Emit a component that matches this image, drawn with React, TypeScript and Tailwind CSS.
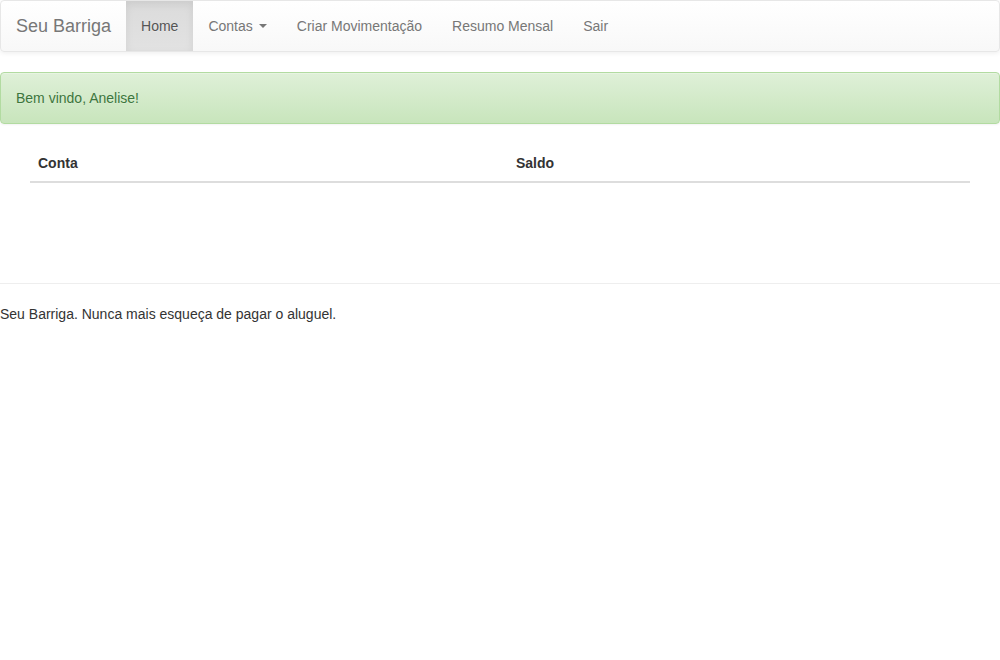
import React from "react";

export default function App() {
  const font = { fontFamily: '"Liberation Sans", Arial, Helvetica, sans-serif' };
  return (
    <div className="min-h-[660px] bg-white text-[14px] leading-[20px] text-[#333]" style={font}>
      <nav className="mb-[20px] flex h-[52px] rounded-[4px] border border-[#e7e7e7] bg-[linear-gradient(to_bottom,#fff_0,#f8f8f8_100%)] shadow-[inset_0_1px_0_rgba(255,255,255,0.15),0_1px_5px_rgba(0,0,0,0.075)]">
        <a className="h-[50px] px-[15px] py-[15px] text-[18px] leading-[20px] text-[#777] [text-shadow:0_1px_0_rgba(255,255,255,0.25)]">
          Seu Barriga
        </a>
        <ul className="flex">
          <li>
            <a className="block bg-[linear-gradient(to_bottom,#dbdbdb_0,#e2e2e2_100%)] px-[15px] py-[15px] text-[#555] shadow-[inset_0_3px_9px_rgba(0,0,0,0.075)] [text-shadow:0_1px_0_rgba(255,255,255,0.25)]">
              Home
            </a>
          </li>
          <li>
            <a className="flex items-center px-[15px] py-[15px] text-[#777] [text-shadow:0_1px_0_rgba(255,255,255,0.25)]">
              Contas
              <span className="ml-[6px] inline-block h-0 w-0 border-x-[4px] border-t-[4px] border-x-transparent border-t-[#777]" />
            </a>
          </li>
          <li>
            <a className="block px-[15px] py-[15px] text-[#777] [text-shadow:0_1px_0_rgba(255,255,255,0.25)]">Criar Movimentação</a>
          </li>
          <li>
            <a className="block px-[15px] py-[15px] text-[#777] [text-shadow:0_1px_0_rgba(255,255,255,0.25)]">Resumo Mensal</a>
          </li>
          <li>
            <a className="block px-[15px] py-[15px] text-[#777] [text-shadow:0_1px_0_rgba(255,255,255,0.25)]">Sair</a>
          </li>
        </ul>
      </nav>

      <div className="mb-[20px] rounded-[4px] border border-[#b2dba1] bg-[linear-gradient(to_bottom,#dff0d8_0,#c8e5bc_100%)] p-[15px] text-[#3c763d] shadow-[inset_0_1px_0_rgba(255,255,255,0.25),0_1px_2px_rgba(0,0,0,0.05)] [text-shadow:0_1px_0_rgba(255,255,255,0.2)]">
        Bem vindo, Anelise!
      </div>

      <div className="px-[30px]">
        <table className="mb-[20px] w-full border-collapse">
          <thead>
            <tr>
              <th className="w-[478px] border-b-2 border-[#ddd] px-[8px] pb-[8px] pt-[9px] text-left font-bold">Conta</th>
              <th className="border-b-2 border-[#ddd] px-[8px] pb-[8px] pt-[9px] text-left font-bold">Saldo</th>
            </tr>
          </thead>
          <tbody />
        </table>
      </div>

      <div className="h-[80px]" />
      <hr className="mb-[20px] border-0 border-t border-[#eee]" />
      <div>Seu Barriga. Nunca mais esqueça de pagar o aluguel.</div>
    </div>
  );
}
